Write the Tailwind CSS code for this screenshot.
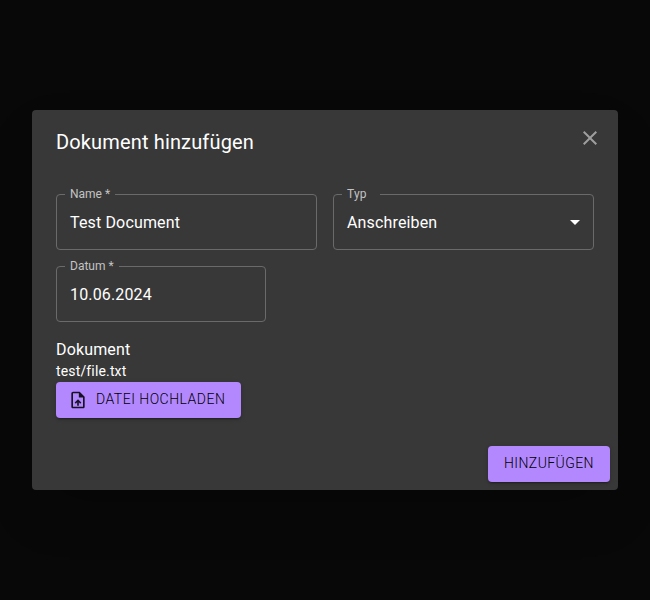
<!DOCTYPE html>
<html lang="de">
<head>
<meta charset="utf-8">
<title>Dokument hinzufügen</title>
<script src="https://cdn.jsdelivr.net/npm/@tailwindcss/browser@4"></script>
</head>
<body class="bg-[#080808] font-[Roboto,sans-serif] text-white">
<main class="flex h-[600px] w-[650px] items-center justify-center overflow-hidden">
  <section class="relative flex h-[380px] w-[586px] flex-col rounded bg-[#383838] shadow-2xl">
    <h2 class="px-6 py-4 text-[20px] leading-8 font-normal tracking-[0.0075em]">Dokument hinzufügen</h2>
    <button class="absolute top-2 right-2 flex size-10 items-center justify-center text-[#9e9e9e]" aria-label="Schließen">
      <svg class="size-6" viewBox="0 0 24 24" fill="currentColor"><path d="M19 6.41 17.59 5 12 10.59 6.41 5 5 6.41 10.59 12 5 17.59 6.41 19 12 13.41 17.59 19 19 17.59 13.41 12z"/></svg>
    </button>
    <div class="flex flex-col px-6 pt-5">
      <div class="flex gap-4">
        <div class="relative flex h-14 w-[261px] items-center rounded border border-[#6a6a6a] px-[13px] pt-0.5 text-base tracking-[0.00938em]">
          <span class="absolute -top-[9px] left-2 bg-[#383838] px-[5px] text-xs leading-4 tracking-[0] text-[#c3c3c3]">Name *</span>Test Document
        </div>
        <div class="relative flex h-14 w-[261px] items-center justify-between rounded border border-[#6a6a6a] pr-[6px] pl-[13px] text-base tracking-[0.00938em]">
          <span class="absolute -top-[9px] left-2 w-[38px] bg-[#383838] px-[5px] text-xs leading-4 text-[#c3c3c3]">Typ</span><span class="pt-0.5">Anschreiben</span>
          <svg class="size-6" viewBox="0 0 24 24" fill="currentColor"><path d="M7 10l5 5 5-5z"/></svg>
        </div>
      </div>
      <div class="relative mt-4 flex h-14 w-[210px] items-center rounded border border-[#6a6a6a] px-[13px] pt-0.5 text-base tracking-[0.00938em]">
        <span class="absolute -top-[9px] left-2 bg-[#383838] px-[5px] text-xs leading-4 tracking-[0] text-[#c3c3c3]">Datum *</span>10.06.2024
      </div>
      <div class="mt-4 text-base leading-6 tracking-[0.00938em]">Dokument</div>
      <div class="h-5 text-sm leading-[18px] tracking-[0.01071em]">test/file.txt</div>
      <button class="flex h-9 w-[185px] items-center gap-2 rounded bg-[#b388ff] pl-3 text-sm font-light tracking-[0.48px] text-black shadow-[0_3px_1px_-2px_rgba(0,0,0,0.2),0_2px_2px_rgba(0,0,0,0.14),0_1px_5px_rgba(0,0,0,0.12)]">
        <svg class="size-5 text-black/87" viewBox="0 0 24 24" fill="currentColor"><path d="M14 2H6c-1.1 0-1.99.9-1.99 2L4 20c0 1.1.89 2 1.99 2H18c1.1 0 2-.9 2-2V8zm4 18H6V4h7v5h5zM8 15.01l1.41 1.41L11 14.84V19h2v-4.16l1.59 1.59L16 15.01 12.01 11z"/></svg><span class="pb-0.5">DATEI HOCHLADEN</span>
      </button>
    </div>
    <div class="mt-auto flex justify-end p-2">
      <button class="h-9 w-[122px] rounded bg-[#b388ff] pb-0.5 text-sm font-light tracking-[0.42px] text-black shadow-[0_3px_1px_-2px_rgba(0,0,0,0.2),0_2px_2px_rgba(0,0,0,0.14),0_1px_5px_rgba(0,0,0,0.12)]">HINZUFÜGEN</button>
    </div>
  </section>
</main>
</body>
</html>
